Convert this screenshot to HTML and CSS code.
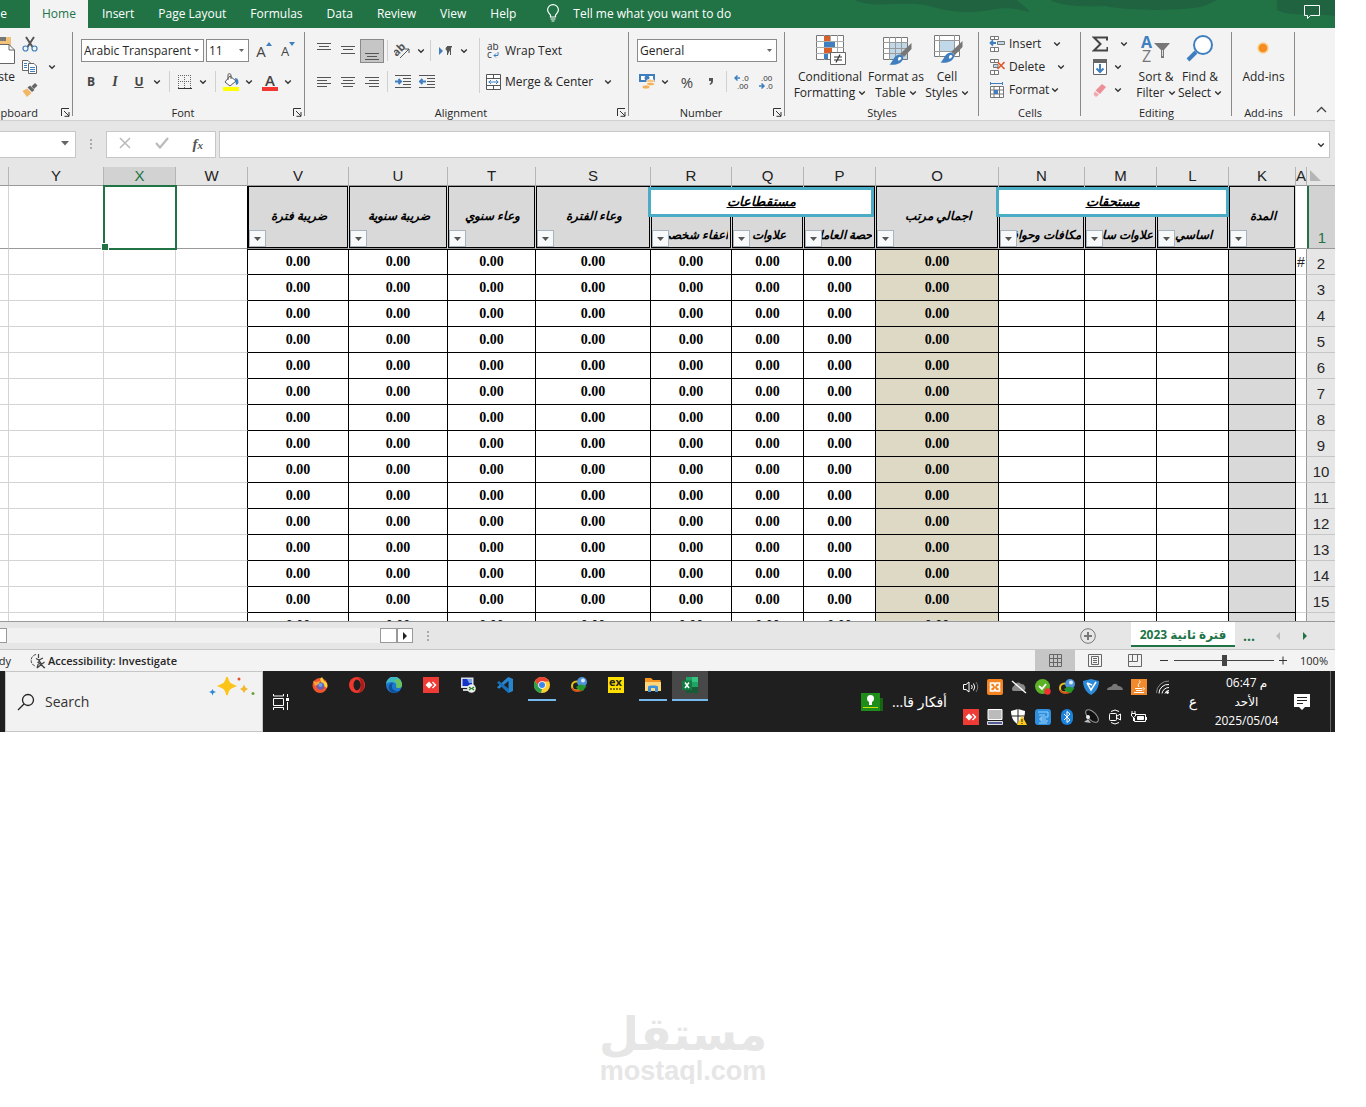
FILE: index.html
```html
<!DOCTYPE html>
<html lang="en">
<head>
<meta charset="UTF-8">
<title>Payroll sheet</title>
<link rel="stylesheet" href="styles.css">
</head>

<body>

<svg class="defs" aria-hidden="true">
  <symbol id="chev" viewBox="0 0 8 8"><path d="M1.2 2.6L4 5.2L6.8 2.6" fill="none" stroke="#333" stroke-width="1.4"/></symbol>
  <symbol id="launch" viewBox="0 0 9 9"><path d="M.5 8V.5H8M3 3L8 8M8 4V8.300H3.500" fill="none" stroke="#333"/></symbol>
  <symbol id="idm" viewBox="0 0 16 16"><circle cx="5.500" cy="9" r="4.500" fill="none" stroke="#e3c01f" stroke-width="2"/><path d="M1 11C3 15 8 14.500 11 13" fill="none" stroke="#d9481c" stroke-width="1.500"/><circle cx="11" cy="5" r="5" fill="#4d93d9"/><circle cx="12" cy="3.500" r="2" fill="#dbe9f5"/><path d="M5 10L9 7.500L15.500 9L12 14L7 12.500Z" fill="#23962c"/></symbol>
  <symbol id="anydesk" viewBox="0 0 16 16"><path d="M0 0H16V16H0Z" fill="#ef3b36"/><path d="M6 4.500L9.500 8L6 11.500L2.500 8ZM10 4.500L13.500 8L10 11.500L9 10.500L11.500 8L9 5.500Z" fill="#fff"/></symbol>
</svg>

<div class="app">

<header class="tabs">
  <a class="tab file" href="#file">File</a>
  <a class="tab active" href="#home">Home</a>
  <a class="tab" href="#insert">Insert</a>
  <a class="tab" href="#layout">Page Layout</a>
  <a class="tab" href="#formulas">Formulas</a>
  <a class="tab" href="#data">Data</a>
  <a class="tab" href="#review">Review</a>
  <a class="tab" href="#view">View</a>
  <a class="tab" href="#help">Help</a>
  <button class="tell">
    <svg width="14" height="18" viewBox="0 0 14 18" fill="none" stroke="#fff" stroke-width="1.200"><path d="M4.500 13V11C3.500 9.500 1.600 8.500 1.600 5.800A5.400 5.200 0 0 1 12.400 5.800C12.400 8.500 10.500 9.500 9.500 11V13ZM4.500 15H9.500M5.500 17H8.500"/></svg>
    Tell me what you want to do
  </button>
  <svg class="swirl" width="480" height="28" viewBox="0 0 480 28"><path d="M0 0C20 9 40 1 70 5C95 12 110 14 135 10C155 6 165 10 175 12C170 6 165 3 162 0ZM195 0C205 6 230 7 250 6C275 11 320 11 345 7C355 4 358 2 362 0ZM422 0V10C440 18 455 12 480 16V0Z" fill="#1f6340"/></svg>
  <button class="comments" aria-label="Comments"><svg width="18" height="16" viewBox="0 0 18 16" fill="none" stroke="#fff"><path d="M1.500 1.500H16.500V11.500H7.500L4.500 14.500V11.500H1.500Z"/></svg></button>
</header>

<section class="ribbon">

  <div class="group clipboard">
    <div class="body">
      <button class="paste">
        <svg width="40" height="32" viewBox="0 0 40 32"><path d="M10 5H36V28H10Z" fill="#f3c27a"/><path d="M22 5H31V9H20Z" fill="#777"/><path d="M20.500 12.500H34L39.500 18V31.500H20.500Z" fill="#fff" stroke="#666"/><path d="M34 12.500V18H39.500" fill="none" stroke="#666"/></svg>
        <span>Paste</span>
      </button>
      <div class="stack">
        <div class="line"><button class="ico" aria-label="Cut"><svg width="16" height="16" viewBox="0 0 16 16" fill="none"><path d="M4 1L10.500 11M12 1L5.500 11" stroke="#555" stroke-width="2"/><circle cx="3.500" cy="12.500" r="2.500" stroke="#3f7fbf" stroke-width="1.200"/><circle cx="12.500" cy="12.500" r="2.500" stroke="#3f7fbf" stroke-width="1.200"/></svg></button></div>
        <div class="line"><button class="ico" aria-label="Copy"><svg width="16" height="16" viewBox="0 0 16 16" fill="#fff" stroke="#666"><path d="M.5 1.500H6L8.500 4V11.500H.5Z"/><path d="M6.500 4.500H12L14.500 7V14.500H6.500Z"/><path d="M2 4.500H5M2 6.500H5M2 8.500H5M8 8.500H13M8 10.500H13M8 12.500H13" stroke="#3f7fbf"/></svg></button><button class="drop" aria-label="Copy options"><svg width="8" height="8"><use href="#chev"/></svg></button></div>
        <div class="line"><button class="ico" aria-label="Format Painter"><svg width="16" height="16" viewBox="0 0 16 16"><path d="M13 1L15.500 3.500L12 7L9.500 4.500Z" fill="#666"/><path d="M8 3.500L12.500 8L10 10L5.500 5.500Z" fill="#666"/><path d="M5 6.500L9.500 11L5 15L.5 9Z" fill="#f1b765"/></svg></button></div>
      </div>
    </div>
    <div class="caption"><span>Clipboard</span><button class="launch" aria-label="Clipboard settings"><svg width="9" height="9"><use href="#launch"/></svg></button></div>
  </div>

  <div class="group font">
    <div class="rows">
      <div class="row">
        <select class="fontname" aria-label="Font"><option>Arabic Transparent</option></select>
        <select class="fontsize" aria-label="Font size"><option>11</option></select>
        <button class="ico grow" aria-label="Increase font size">A<svg width="6" height="4" viewBox="0 0 6 4"><path d="M0 4L3 0L6 4Z" fill="#3f7fbf"/></svg></button>
        <button class="ico grow small" aria-label="Decrease font size">A<svg width="6" height="4" viewBox="0 0 6 4"><path d="M0 0L3 4L6 0Z" fill="#3f7fbf"/></svg></button>
      </div>
      <div class="row">
        <button class="ico"><b>B</b></button>
        <button class="ico italic"><b>I</b></button>
        <button class="ico under"><b>U</b></button>
        <button class="drop" aria-label="Underline options"><svg width="8" height="8"><use href="#chev"/></svg></button>
        <i class="sep"></i>
        <button class="ico" aria-label="Borders"><svg width="14" height="14" viewBox="0 0 14 14" fill="none" stroke="#666"><path d="M.5 0V13M6.500 0V13M12.500 0V13M0 .5H13M0 6.500H13" stroke-dasharray="1 1"/><path d="M0 13.500H14" stroke="#333"/></svg></button>
        <button class="drop" aria-label="Border options"><svg width="8" height="8"><use href="#chev"/></svg></button>
        <i class="sep"></i>
        <button class="ico" aria-label="Fill color"><svg width="18" height="18" viewBox="0 0 18 18"><path d="M8 3L14 8L8 13L3 9Z" fill="#fff" stroke="#555"/><path d="M6 7V1.500C6 .5 9 .5 9 2V6" fill="none" stroke="#555"/><path d="M13 5C16 5 17 8 16 11L14 12Z" fill="#3f7fbf"/><path d="M1 14H17V18H1Z" fill="#ffff00"/></svg></button>
        <button class="drop" aria-label="Fill options"><svg width="8" height="8"><use href="#chev"/></svg></button>
        <button class="ico fontcolor" aria-label="Font color">A</button>
        <button class="drop" aria-label="Font color options"><svg width="8" height="8"><use href="#chev"/></svg></button>
      </div>
    </div>
    <div class="caption"><span>Font</span><button class="launch" aria-label="Font settings"><svg width="9" height="9"><use href="#launch"/></svg></button></div>
  </div>

  <div class="group alignment">
    <div class="body">
      <div class="rows leftrows">
        <div class="row">
          <button class="ico" aria-label="Top align"><svg width="14" height="20" viewBox="0 0 14 20" stroke="#555"><path d="M0 2.500H14M2 5.500H12M0 8.500H14"/></svg></button>
          <button class="ico" aria-label="Middle align"><svg width="14" height="20" viewBox="0 0 14 20" stroke="#555"><path d="M0 5.500H14M2 8.500H12M0 12.500H14"/></svg></button>
          <button class="ico pressed" aria-label="Bottom align"><svg width="14" height="20" viewBox="0 0 14 20" stroke="#555"><path d="M0 12.500H14M2 15.500H12M0 18.500H14"/></svg></button>
          <i class="sep"></i>
          <button class="ico" aria-label="Orientation"><svg width="18" height="16" viewBox="0 0 18 16"><text x="0" y="10" transform="rotate(-45 6 9)" font-size="11" font-weight="bold" fill="#555">ab</text><path d="M6 15L15 6M11 6H15V10" fill="none" stroke="#555"/></svg></button>
          <button class="drop" aria-label="Orientation options"><svg width="8" height="8"><use href="#chev"/></svg></button>
          <i class="sep"></i>
          <button class="ico" aria-label="Text direction"><svg width="14" height="12" viewBox="0 0 14 12"><path d="M0 2L4 6L0 10Z" fill="#3f7fbf"/><path d="M8.500 10V1.500H13M11.500 1.500V10M8.500 1.500A2.500 2.500 0 0 0 8.500 6Z" fill="#555" stroke="#555"/></svg></button>
          <button class="drop" aria-label="Direction options"><svg width="8" height="8"><use href="#chev"/></svg></button>
        </div>
        <div class="row">
          <button class="ico" aria-label="Align left"><svg width="14" height="12" viewBox="0 0 14 12" stroke="#555"><path d="M0 1.500H14M0 4.500H10M0 7.500H14M0 10.500H10"/></svg></button>
          <button class="ico" aria-label="Center"><svg width="14" height="12" viewBox="0 0 14 12" stroke="#555"><path d="M0 1.500H14M2 4.500H12M0 7.500H14M2 10.500H12"/></svg></button>
          <button class="ico" aria-label="Align right"><svg width="14" height="12" viewBox="0 0 14 12" stroke="#555"><path d="M0 1.500H14M4 4.500H14M0 7.500H14M4 10.500H14"/></svg></button>
          <i class="sep"></i>
          <button class="ico" aria-label="Decrease indent"><svg width="16" height="14" viewBox="0 0 16 14" fill="none" stroke="#555"><path d="M0 .5H16M8 3.500H16M8 6.500H16M8 9.500H16M0 12.500H16"/><path d="M0 6.500H6M3.500 4L6 6.500L3.500 9" stroke="#3f7fbf" stroke-width="2"/></svg></button>
          <button class="ico" aria-label="Increase indent"><svg width="16" height="14" viewBox="0 0 16 14" fill="none" stroke="#555"><path d="M0 .5H16M8 3.500H16M8 6.500H16M8 9.500H16M0 12.500H16"/><path d="M7 6.500H1M3.500 4L1 6.500L3.500 9" stroke="#3f7fbf" stroke-width="2"/></svg></button>
        </div>
      </div>
      <div class="rows rightrows">
        <div class="row"><button class="wide"><svg width="15" height="16" viewBox="0 0 15 16"><text x="1" y="7" font-size="10" fill="#333">ab</text><text x="1" y="15" font-size="10" fill="#333">c</text><path d="M12 9V12.500H8M10 10.500L8 12.500L10 14.500" fill="none" stroke="#3f7fbf"/></svg>Wrap Text</button></div>
        <div class="row"><button class="wide"><svg width="15" height="16" viewBox="0 0 15 16" fill="#fff" stroke="#555"><path d="M.5 .5H14.500V15.500H.5ZM.5 4.500H14.500M.5 11.500H14.500M7.500 .5V4M7.500 12V15.500"/><path d="M2.500 8H12.500M5 6L3 8L5 10M10 6L12 8L10 10" fill="none" stroke="#3f7fbf"/></svg>Merge &amp; Center</button><button class="drop far" aria-label="Merge options"><svg width="8" height="8"><use href="#chev"/></svg></button></div>
      </div>
    </div>
    <div class="caption"><span>Alignment</span><button class="launch" aria-label="Alignment settings"><svg width="9" height="9"><use href="#launch"/></svg></button></div>
  </div>

  <div class="group number">
    <div class="rows">
      <div class="row"><select class="format" aria-label="Number format"><option>General</option></select></div>
      <div class="row">
        <button class="ico" aria-label="Accounting format"><svg width="18" height="17" viewBox="0 0 18 17"><path d="M1 1H17V9H1Z" fill="#3f7fbf"/><path d="M3 3H15V7H3Z" fill="#fff"/><circle cx="9" cy="5" r="2.500" fill="#3f7fbf"/><ellipse cx="12.500" cy="8" rx="4" ry="1.800" fill="#f6c27c" stroke="#fff" stroke-width=".6"/><ellipse cx="12.500" cy="11" rx="4" ry="1.800" fill="#f0b25c" stroke="#fff" stroke-width=".6"/><ellipse cx="8" cy="14" rx="4" ry="2" fill="#f0b25c" stroke="#fff" stroke-width=".6"/></svg></button>
        <button class="drop" aria-label="Currency options"><svg width="8" height="8"><use href="#chev"/></svg></button>
        <button class="ico percent">%</button>
        <button class="ico comma" aria-label="Comma style"><svg width="6" height="10" viewBox="0 0 6 10"><path d="M1 1H5V4C5 6 4 7 2 8L1.500 7C3 6 3 5 3 4H1Z" fill="#555"/></svg></button>
        <i class="sep"></i>
        <button class="ico dec" aria-label="Increase decimal"><svg width="16" height="16" viewBox="0 0 16 16"><path d="M6 4H1M3.500 1.500L1 4L3.500 6.500" fill="none" stroke="#3f7fbf" stroke-width="1.500"/><text x="8" y="7">.0</text><text x="3" y="15">.00</text></svg></button>
        <button class="ico dec" aria-label="Decrease decimal"><svg width="16" height="16" viewBox="0 0 16 16"><text x="3" y="7">.00</text><path d="M1 12H6M3.500 9.500L6 12L3.500 14.500" fill="none" stroke="#3f7fbf" stroke-width="1.500"/><text x="8" y="15">.0</text></svg></button>
      </div>
    </div>
    <div class="caption"><span>Number</span><button class="launch" aria-label="Number settings"><svg width="9" height="9"><use href="#launch"/></svg></button></div>
  </div>

  <div class="group styles">
    <div class="body">
      <button class="big w78"><svg width="32" height="32" viewBox="0 0 32 32"><path d="M2.500 1.500H29.500V25.500H2.500Z" fill="#fff" stroke="#777"/><path d="M2 7.500H30M2 13.500H30M2 19.500H30M10.500 1V26M16.500 1V26M23.500 1V26" stroke="#aaa"/><path d="M10 2H16V7H10ZM10 14H18V19H10Z" fill="#d8602b"/><path d="M10 8H21V13H10ZM10 20H14V25H10Z" fill="#3f7fbf"/><path d="M16.500 18.500H31.500V30.500H16.500Z" fill="#fff" stroke="#666"/><path d="M20 23H28M20 26H28M26 20.500L22 28.500" stroke="#333" stroke-width="1.200"/></svg><span>Conditional</span><span>Formatting <svg width="8" height="8"><use href="#chev"/></svg></span></button>
      <button class="big w54"><svg width="32" height="32" viewBox="0 0 32 32"><path d="M3.500 3.500H27.500V25.500H3.500Z" fill="#fff" stroke="#777"/><path d="M9 9H27V25H9Z" fill="#c0d8e8"/><path d="M3 8.500H28M3 14.500H28M3 19.500H28M9.500 3V26M15.500 3V26M21.500 3V26" stroke="#999"/><path d="M31.500 9V15L24 23L20 20Z" fill="#777"/><path d="M19 20.500C24 21 25 25 20 29C16 31 12 31 9.500 30.500C13 28 13 22 19 20.500Z" fill="#3f7fbf"/><path d="M19 23C22 23 22 25 20 26C18 28 17 25 19 23Z" fill="#fff"/></svg><span>Format as</span><span>Table <svg width="8" height="8"><use href="#chev"/></svg></span></button>
      <button class="big w48"><svg width="32" height="32" viewBox="0 0 32 32"><path d="M3.500 1.500H28.500V22.500H3.500Z" fill="#fff" stroke="#777"/><path d="M8 7H24V17H8Z" fill="#c0d8e8"/><path d="M3 6.500H29M3 17.500H29M8.500 1V23M23.500 1V23" stroke="#999"/><path d="M31.500 7V13L24 21L20 18Z" fill="#777"/><path d="M19 18.500C24 19 25 23 20 27C16 29 12 29 9.500 28.500C13 26 13 20 19 18.500Z" fill="#3f7fbf"/><path d="M19 21C22 21 22 23 20 24C18 26 17 23 19 21Z" fill="#fff"/></svg><span>Cell</span><span>Styles <svg width="8" height="8"><use href="#chev"/></svg></span></button>
    </div>
    <div class="caption"><span>Styles</span></div>
  </div>

  <div class="group cells">
    <div class="stack">
      <div class="line"><button class="wide"><svg width="16" height="16" viewBox="0 0 16 16" fill="#fff" stroke="#777"><path d="M1.500 .5H9.500V3.500H1.500ZM5.500 .5V3.500M1.500 11.500H9.500V15.500H1.500ZM5.500 11.500V15.500"/><path d="M8.500 5.500H15.500V8.500H8.500Z" fill="#c0d8e8"/><path d="M7 7H1.500M4 4.500L1.500 7L4 9.500" fill="none" stroke="#3f7fbf" stroke-width="1.800"/></svg>Insert</button><button class="drop gap10" aria-label="Insert options"><svg width="8" height="8"><use href="#chev"/></svg></button></div>
      <div class="line"><button class="wide"><svg width="16" height="16" viewBox="0 0 16 16" fill="#fff" stroke="#777"><path d="M1.500 .5H9.500V3.500H1.500ZM5.500 .5V3.500M1.500 11.500H9.500V15.500H1.500ZM5.500 11.500V15.500"/><path d="M4.500 5.500H9V8.500H4.500Z" fill="#c0d8e8"/><path d="M8.500 3L15.500 10M15.500 3L8.500 10" stroke="#e05a2b" stroke-width="1.600"/></svg>Delete</button><button class="drop gap10" aria-label="Delete options"><svg width="8" height="8"><use href="#chev"/></svg></button></div>
      <div class="line"><button class="wide"><svg width="16" height="16" viewBox="0 0 16 16" fill="#fff" stroke="#777"><path d="M1.500 4.500H14.500V15.500H1.500ZM1.500 8H14.500M1.500 12H14.500M5 4.500V15.500M10.500 4.500V15.500"/><path d="M5 8H9V12H5Z" fill="#3f7fbf" stroke="none"/><path d="M1.500 0V3M13.500 0V3M1.500 1.500H13.500" stroke="#3f7fbf"/></svg>Format</button><button class="drop" aria-label="Format options"><svg width="8" height="8"><use href="#chev"/></svg></button></div>
    </div>
    <div class="caption"><span>Cells</span></div>
  </div>

  <div class="group editing">
    <div class="body">
      <div class="stack">
        <div class="line"><button class="ico" aria-label="AutoSum"><svg width="16" height="16" viewBox="0 0 16 16"><path d="M15 4.500V1.500H2L8.500 8L2 14.500H15.500V11" fill="none" stroke="#444" stroke-width="2"/></svg></button><button class="drop gap6" aria-label="AutoSum options"><svg width="8" height="8"><use href="#chev"/></svg></button></div>
        <div class="line"><button class="ico" aria-label="Fill"><svg width="14" height="16" viewBox="0 0 14 16"><path d="M.5 .5H13.500V15.500H.5Z" fill="#fff" stroke="#666"/><path d="M0 0H14V4H0Z" fill="#666"/><path d="M7 5V13M3.500 9.500L7 13L10.500 9.500" fill="none" stroke="#3f7fbf" stroke-width="2"/></svg></button><button class="drop" aria-label="Fill options"><svg width="8" height="8"><use href="#chev"/></svg></button></div>
        <div class="line"><button class="ico" aria-label="Clear"><svg width="14" height="14" viewBox="0 0 14 14"><path d="M9 1L13 4L7 11L2.500 7.500Z" fill="#ee8f98"/><path d="M2 8.500L6 11.500L4 13.500H2L.5 11Z" fill="#f2a8ae"/></svg></button><button class="drop" aria-label="Clear options"><svg width="8" height="8"><use href="#chev"/></svg></button></div>
      </div>
      <button class="big w44"><svg width="32" height="32" viewBox="0 0 32 32"><text x="1" y="14" font-size="16" font-weight="bold" fill="#3f7fbf">A</text><text x="2" y="28" font-size="16" fill="#777">Z</text><path d="M14 9H30L24 16V24H21V16Z" fill="#777"/><path d="M22.500 16V22" stroke="#ddd"/></svg><span>Sort &amp;</span><span>Filter <svg width="8" height="8"><use href="#chev"/></svg></span></button>
      <button class="big w44"><svg width="32" height="32" viewBox="0 0 32 32"><circle cx="19" cy="11" r="9" fill="#fff" stroke="#3f7fbf" stroke-width="2"/><path d="M12 18L4 26" stroke="#3f7fbf" stroke-width="4"/></svg><span>Find &amp;</span><span>Select <svg width="8" height="8"><use href="#chev"/></svg></span></button>
    </div>
    <div class="caption"><span>Editing</span></div>
  </div>

  <div class="group addins">
    <div class="body">
      <button class="big"><svg width="32" height="32" viewBox="0 0 32 32"><circle cx="15" cy="14" r="5" fill="#f68b1f" stroke="#f9cf8b" stroke-width="1.500"/></svg><span>Add-ins</span></button>
    </div>
    <div class="caption"><span>Add-ins</span></div>
  </div>

  <button class="collapse" aria-label="Collapse ribbon"><svg width="11" height="7" viewBox="0 0 11 7"><path d="M1 6L5.500 1.500L10 6" fill="none" stroke="#444" stroke-width="1.300"/></svg></button>
</section>

<div class="formulabar">
  <select class="namebox" aria-label="Name box"><option></option></select>
  <span class="dots"></span>
  <div class="fxbox">
    <button aria-label="Cancel"><svg width="12" height="12" viewBox="0 0 12 12"><path d="M1 1L11 11M11 1L1 11" stroke="#bbb" stroke-width="1.600"/></svg></button>
    <button aria-label="Enter"><svg width="14" height="12" viewBox="0 0 14 12"><path d="M1 6L5 10.500L13 1" fill="none" stroke="#bbb" stroke-width="2.200"/></svg></button>
    <button class="fx">f<small>x</small></button>
  </div>
  <div class="fxinput">
    <input type="text" aria-label="Formula">
    <button aria-label="Expand formula bar"><svg width="10" height="8"><use href="#chev"/></svg></button>
  </div>
</div>

<main class="sheet">
  <table>
    <colgroup>
      <col class="c-z"><col class="c-y"><col class="c-72"><col class="c-72"><col class="c-v"><col class="c-u"><col class="c-t"><col class="c-s"><col class="c-r"><col class="c-72"><col class="c-72"><col class="c-o"><col class="c-n"><col class="c-72"><col class="c-72"><col class="c-k"><col class="c-a"><col class="c-num">
    </colgroup>
    <thead>
      <tr class="letters">
        <th></th><th>Y</th><th class="current">X</th><th>W</th><th>V</th><th>U</th><th>T</th><th>S</th><th>R</th><th>Q</th><th>P</th><th>O</th><th>N</th><th>M</th><th>L</th><th>K</th><th>A</th>
        <th><svg width="12" height="12" viewBox="0 0 12 12"><path d="M0 0V11H11Z" fill="#b5b5b5"/></svg></th>
      </tr>
    </thead>
    <tbody id="rows">
      <tr class="titles">
        <td></td><td></td><td class="selected"></td><td></td>
        <th dir="rtl">ضريبة فترة</th>
        <th dir="rtl">ضريبة سنوية</th>
        <th dir="rtl">وعاء سنوي</th>
        <th dir="rtl">وعاء الفترة</th>
        <th dir="rtl" class="low"><span>اعفاء شخصي</span><div class="textbox deductions">مستقطاعات</div></th>
        <th dir="rtl" class="low short"><span>علاوات</span></th>
        <th dir="rtl" class="low"><span>حصة العامل</span></th>
        <th dir="rtl">اجمالي مرتب</th>
        <th dir="rtl" class="low"><span>مكافات وحوافز</span><div class="textbox dues">مستحقات</div></th>
        <th dir="rtl" class="low"><span>علاوات سابقة</span></th>
        <th dir="rtl" class="low short"><span>اساسي</span></th>
        <th dir="rtl">المدة</th>
        <td class="a"></td><td class="num current">1</td>
      </tr>
    </tbody>
  </table>
</main>

<div class="sheetbar">
  <div class="hscroll">
    <button class="sb" aria-label="Scroll left"></button>
    <div class="track"></div>
    <div class="thumb"></div>
    <button class="sb" aria-label="Scroll right"><svg width="6" height="8" viewBox="0 0 6 8"><path d="M1 0L5 4L1 8Z" fill="#222"/></svg></button>
  </div>
  <span class="dots"></span>
  <button class="add" aria-label="New sheet"><svg width="16" height="16" viewBox="0 0 16 16" fill="none" stroke="#777"><circle cx="8" cy="8" r="7.300"/><path d="M8 4V12M4 8H12" stroke-width="2"/></svg></button>
  <a class="sheettab" dir="rtl" href="#sheet">فترة ثانية 2023</a>
  <a class="more" href="#sheets">...</a>
  <button class="nav" aria-label="Previous sheet"><svg width="5" height="8" viewBox="0 0 5 8"><path d="M5 0L1 4L5 8Z" fill="#bbb"/></svg></button>
  <button class="nav" aria-label="Next sheet"><svg width="5" height="8" viewBox="0 0 5 8"><path d="M0 0L4 4L0 8Z" fill="#217346"/></svg></button>
</div>

<div class="statusbar">
  <span class="ready">Ready</span>
  <button class="access"><svg width="16" height="16" viewBox="0 0 16 16" fill="none" stroke="#444"><path d="M6 1.500A6 6 0 0 0 5 13" stroke-dasharray="3 1"/><path d="M6 5.500L9 7L13 5M8.500 1L8.500 5M9.500 7L7 15M9.500 8L14 15M7.500 9L15 15M14.500 9L7 15" stroke-width="1.200"/></svg>Accessibility: Investigate</button>
  <div class="views">
    <button class="on" aria-label="Normal view"><svg width="13" height="13" viewBox="0 0 13 13" fill="none" stroke="#666"><path d="M.5 .5H12.500V12.500H.5ZM4.500 0V13M8.500 0V13M0 4.500H13M0 8.500H13"/></svg></button>
    <button aria-label="Page layout view"><svg width="14" height="13" viewBox="0 0 14 13" fill="none" stroke="#666"><path d="M.5 .5H13.500V12.500H.5ZM3.500 2.500H10.500V10.500H3.500ZM5 4.500H9M5 6.500H9M5 8.500H9"/></svg></button>
    <button aria-label="Page break view"><svg width="14" height="13" viewBox="0 0 14 13" fill="none" stroke="#666"><path d="M.5 .5H13.500V12.500H.5ZM4.500 0V7.500H.5M4.500 7.500H9.500V0"/></svg></button>
  </div>
  <div class="zoom">
    <button aria-label="Zoom out"><svg width="9" height="9" viewBox="0 0 9 9"><path d="M0 4.500H8" stroke="#333"/></svg></button>
    <input type="range" aria-label="Zoom" min="0" max="100" value="50">
    <button aria-label="Zoom in"><svg width="9" height="9" viewBox="0 0 9 9"><path d="M0 4.500H8M4 .5V8.500" stroke="#333"/></svg></button>
  </div>
  <span class="percentage">100%</span>
</div>

<footer class="taskbar">
  <label class="search">
    <svg width="18" height="18" viewBox="0 0 18 18" fill="none" stroke="#222" stroke-width="1.300"><circle cx="11" cy="7" r="5.500"/><path d="M7 11L1 17"/></svg>
    <input type="text" placeholder="Search">
    <svg width="46" height="20" viewBox="0 0 46 20"><path d="M18 0C19.500 6 20.500 7 26 9C20.500 11 19.500 12 18 18C16.500 12 15.500 11 10 9C15.500 7 16.500 6 18 0Z" fill="#fcc419" stroke="#fcc419" stroke-width="1.500"/><path d="M35 7.500L36.500 10.500L39 12L36.500 13.500L35 16L33.500 13.500L31 12L33.500 10.500Z" fill="#f5b72a"/><path d="M3.500 12L4.500 14L7 15L4.500 16L3.500 18.500L2.500 16L0 15L2.500 14Z" fill="#2b87d3"/><circle cx="30" cy="2" r="1.500" fill="#e0522b"/><circle cx="44" cy="16.500" r="1.500" fill="#6aa338"/></svg>
  </label>
  <button class="taskview" aria-label="Task view"><svg width="16" height="16" viewBox="0 0 16 16" fill="none" stroke="#fff"><path d="M.5 4.500H10.500V11.500H.5ZM.5 0V2H10.500V0M.5 16V13.500H10.500V16M14.500 0V3M14.500 8V16"/><path d="M13 4H16V7H13Z" fill="#fff" stroke="none"/></svg></button>
  <div class="apps">
    <button aria-label="Firefox"><svg width="16" height="16" viewBox="0 0 16 16"><circle cx="8" cy="8.500" r="7.500" fill="#f2542d"/><path d="M8 2L10 0L12 4C15 5 16 8 15 11L10 8Z" fill="#ffd23c"/><circle cx="8.500" cy="9" r="3.800" fill="#6f5bb0"/><path d="M1 4L4 5L8 4L7 7L3 9Z" fill="#f9a13a"/><circle cx="8.500" cy="8" r="2" fill="#6aa6dd"/></svg></button>
    <button aria-label="Opera"><svg width="16" height="16" viewBox="0 0 16 16"><circle cx="8" cy="8" r="8" fill="#f0382f"/><path d="M9 .2A8 8 0 0 1 9 15.800A7 7 0 0 0 11 8A7 7 0 0 0 9 .2Z" fill="#a51d1d"/><ellipse cx="8" cy="8" rx="3.500" ry="5.400" fill="#1f1f1f"/></svg></button>
    <button aria-label="Edge"><svg width="16" height="16" viewBox="0 0 16 16"><circle cx="8" cy="8" r="8" fill="#1c78cf"/><path d="M0 7A8 8 0 0 1 16 8C16 11 12 12 10 10C12 6 6 3 0 7Z" fill="#3fb8c4"/><path d="M12 1.500A8 8 0 0 1 16 8C16 11 12 12 10 10C11.500 7 10 4 8 4Z" fill="#6cc25a"/><path d="M7 6C4 10 7 15 13 14C10 17 4 16 3 12C2 9 4 6 7 6Z" fill="#0f4f94"/></svg></button>
    <button aria-label="AnyDesk"><svg width="16" height="16"><use href="#anydesk"/></svg></button>
    <button aria-label="Remote desktop"><svg width="16" height="16" viewBox="0 0 16 16"><path d="M1 .5H13.500V11H1Z" fill="#d8dde6"/><path d="M2.500 2H12V9H2.500Z" fill="#1235c6"/><path d="M7 2H12V6H9Z" fill="#7fa4ec"/><path d="M3 12H9V14H3Z" fill="#ccc"/><circle cx="11.500" cy="11.500" r="4.300" fill="#eee"/><path d="M9 10L11 11.500L9 13M14 10L12 11.500L14 13" fill="none" stroke="#20851f" stroke-width="1.200"/></svg></button>
    <button aria-label="Visual Studio Code"><svg width="16" height="16" viewBox="0 0 16 16"><path d="M11.500 0L16 2V14L11.500 16V4L2 11.800L0 10.300L10 1Z" fill="#2786d0"/><path d="M0 5.500L2 4L12 12V16L10.500 15.500Z" fill="#1870b8"/></svg></button>
    <button class="open" aria-label="Chrome"><svg width="16" height="16" viewBox="0 0 16 16"><circle cx="8" cy="8" r="8" fill="#ffcf32"/><path d="M1 4A8 8 0 0 1 15 4.500H8L5 9.500Z" fill="#ea4335"/><path d="M1 4L5 10L8 12L7 16A8 8 0 0 1 1 4Z" fill="#2e9f4c"/><circle cx="8" cy="8" r="3.800" fill="#fff"/><circle cx="8" cy="8" r="3" fill="#3d85ee"/></svg></button>
    <button aria-label="Download manager"><svg width="16" height="16"><use href="#idm"/></svg></button>
    <button aria-label="Exness"><svg width="16" height="16" viewBox="0 0 16 16"><path d="M0 0H16V16H0Z" fill="#ffe000"/><text x="1" y="9" font-size="11" font-weight="bold" fill="#222">ex</text><path d="M2 12H14" stroke="#554a00" stroke-width="1.500" stroke-dasharray="2 1"/></svg></button>
    <button class="open" aria-label="File Explorer"><svg width="16" height="16" viewBox="0 0 16 16"><path d="M0 1H6L8 3H15.500V14H0Z" fill="#f5941f"/><path d="M0 5H16V14H0Z" fill="#ffd67a"/><path d="M3 15V9.500C3 8 13 8 13 9.500V15H10V11H6V15Z" fill="#3a93e0"/></svg></button>
    <button class="open front" aria-label="Excel"><svg width="16" height="16" viewBox="0 0 16 16"><path d="M4 0H16V16H4Z" fill="#21a366"/><path d="M10 0H16V5H10Z" fill="#33c481"/><path d="M4 10H16V16H4Z" fill="#185c37"/><path d="M0 3.500H10V13H0Z" fill="#107c41"/><path d="M3 5.500L7 11M7 5.500L3 11" stroke="#fff" stroke-width="1.500"/></svg></button>
  </div>
  <button class="news"><svg width="22" height="18" viewBox="0 0 22 18"><path d="M0 0H19V18H0Z" fill="#1f8d1a"/><path d="M19 5H22V18H19Z" fill="#166412"/><circle cx="9.500" cy="5.500" r="3.500" fill="#fff"/><path d="M8 8H11V12H8Z" fill="#fff"/><path d="M2 14.500H17" stroke="#c8e000"/></svg><span dir="rtl">أفكار قا...</span></button>
  <div class="tray">
    <button aria-label="Volume"><svg width="16" height="16" viewBox="0 0 16 16" fill="none" stroke="#fff"><path d="M.5 5.500H3L6 3V13L3 10.500H.5ZM8.500 6Q10 8 8.500 10M10.500 4.500Q13 8 10.500 11.500"/><path d="M13 3Q16.500 8 13 13" stroke="#777"/></svg></button>
    <button aria-label="XAMPP"><svg width="16" height="16" viewBox="0 0 16 16"><rect width="16" height="16" rx="2" fill="#f5831f"/><path d="M3.500 4H7L8 6L9 4H12.500V7L11 8L12.500 9V12H9L8 10.500L7 12H3.500V9L5 8L3.500 7Z" fill="none" stroke="#fff" stroke-width="1.700"/></svg></button>
    <button aria-label="Cloud offline"><svg width="16" height="16" viewBox="0 0 16 16"><path d="M2 12A3 3 0 0 1 3 7A4 4 0 0 1 10 5A4 4 0 0 1 13 12Z" fill="#888"/><path d="M1 2L15 14" stroke="#fff" stroke-width="1.300"/></svg></button>
    <button aria-label="Antivirus"><svg width="16" height="16" viewBox="0 0 16 16"><circle cx="7.500" cy="7.500" r="7.500" fill="#5cb227"/><path d="M4 7L7 10L11 5" fill="none" stroke="#fff" stroke-width="1.800"/><circle cx="12.500" cy="12.500" r="3.200" fill="#f22f35"/></svg></button>
    <button aria-label="Download manager"><svg width="16" height="16"><use href="#idm"/></svg></button>
    <button aria-label="VPN"><svg width="16" height="16" viewBox="0 0 16 16"><path d="M0 2L8 0L16 2C16 9 12 14 8 16C4 14 0 9 0 2Z" fill="#2b8bd8"/><path d="M4 4L8 11L13 3M4 4L9 6" fill="none" stroke="#fff" stroke-width="1.500"/></svg></button>
    <button aria-label="OneDrive"><svg width="16" height="16" viewBox="0 0 16 16"><path d="M0 11C0 8 4 8 5 7C6 4 10 4 11 7C14 7 16 9 16 11Z" fill="#777"/></svg></button>
    <button aria-label="Java"><svg width="16" height="16" viewBox="0 0 16 16"><path d="M0 0H16V16H0Z" fill="#f08a2c"/><path d="M8.500 1.500C11 4 5 5 8 8M4 9.500H11M5 11.500H11M3 13.500H13M11.500 9C14 8 14 11 11.500 11" fill="none" stroke="#fff"/></svg></button>
    <button aria-label="Network"><svg width="16" height="16" viewBox="0 0 16 16" fill="none" stroke="#fff"><path d="M1.500 14A12 12 0 0 1 14 2" stroke="#888"/><path d="M4 14.500A9 9 0 0 1 14 5.500M7 14.500A7 7 0 0 1 14 8.500M10 14.500A4 4 0 0 1 14 11.500"/><circle cx="12.500" cy="13.500" r="1" fill="#fff"/></svg></button>
    <button aria-label="AnyDesk"><svg width="16" height="16"><use href="#anydesk"/></svg></button>
    <button aria-label="Display"><svg width="16" height="16" viewBox="0 0 16 16"><path d="M1 .5H15V10.500H1Z" fill="#bbb" stroke="#fff"/><path d="M.5 12.500H15.500V15.500H.5Z" fill="#555a99" stroke="#ddd"/></svg></button>
    <button aria-label="Security"><svg width="16" height="16" viewBox="0 0 16 16"><path d="M0 2L7 0L14 2C14 9 11 13 7 15.500C3 13 0 9 0 2Z" fill="#fff"/><path d="M7 0V15M0 7H14" stroke="#222"/><path d="M11 6.500L16 16H6Z" fill="#ffc91a"/><path d="M11 10V13M11 14V15" stroke="#222"/></svg></button>
    <button aria-label="Graphics"><svg width="16" height="16" viewBox="0 0 16 16"><rect width="16" height="16" rx="3" fill="#2d8fdd"/><path d="M3 3H13V8H6V12H13M4 6H10M4 10H11M4 14H12" fill="none" stroke="#9bd0f7"/></svg></button>
    <button aria-label="Bluetooth"><svg width="16" height="16" viewBox="0 0 16 16"><rect x="2" width="12" height="16" rx="6" fill="#1b82dd"/><path d="M5 5L11 11L8 13.500V2.500L11 5L5 11" fill="none" stroke="#fff"/></svg></button>
    <button aria-label="Satellite"><svg width="16" height="16" viewBox="0 0 16 16"><ellipse cx="9" cy="7" rx="4" ry="8" transform="rotate(-45 9 7)" fill="#111" stroke="#999"/><circle cx="5" cy="8" r="2" fill="#eee"/><path d="M1 13L5 10L8 14Z" fill="#bbb"/></svg></button>
    <button aria-label="Meet now"><svg width="16" height="16" viewBox="0 0 16 16" fill="none" stroke="#fff"><rect x="2.500" y="4.500" width="7" height="7" rx="1"/><path d="M10 7L13.500 5V11L10 9M4 2.500Q8 -.5 12 2.500M4 13.500Q8 16.500 12 13.500"/></svg></button>
    <button aria-label="Battery"><svg width="16" height="16" viewBox="0 0 16 16" fill="none" stroke="#fff"><path d="M5 5.500H14.500V12.500H3.500V9M15.500 8V11M1 2V4M4 2V4M.5 4.500H4.500V7L2.500 8.500L.5 7ZM2.500 8V12"/><path d="M6.500 7.500H12.500V10.500H6.500Z" fill="#fff"/></svg></button>
  </div>
  <button class="lang">ع</button>
  <div class="clock"><span>06:47 م</span><span>الأحد</span><span>2025/05/04</span></div>
  <button class="notify" aria-label="Notifications"><svg width="16" height="16" viewBox="0 0 16 16"><path d="M0 0H16V13H11L8 16L5 13H0Z" fill="#fff"/><path d="M3 3.500H13M3 6.500H13M3 9.500H9" stroke="#222"/></svg></button>
</footer>

</div>

<div class="brand">
  <div class="brandname" lang="ar">مستقل</div>
  <div class="domain">mostaql.com</div>
</div>

<script src="script.js"></script>
</body>
</html>
```
FILE: styles.css
```css
*{ box-sizing:border-box; }

body{
  margin:0;
  background:#fff;
  font-family:"Open Sans","DejaVu Sans",sans-serif;
  font-size:12px;
  color:#262626;
}

button, select, input{
  font:inherit;
  color:inherit;
  border:none;
  background:none;
  padding:0;
  margin:0;
  outline:none;
}

button{ white-space:nowrap; }
a{ color:inherit; text-decoration:none; }
svg{ flex:none; }
.defs{ display:none; }

.app{
  margin-right:31px;
  overflow:hidden;
}

/* tab strip */
.tabs{
  display:flex;
  height:28px;
  background:#217346;
  color:#fff;
  position:relative;
}

.tab{
  display:flex;
  align-items:center;
  padding:0 12px 2px;
}

.file{
  width:30px;
  padding-left:0;
  padding-right:23px;
  justify-content:flex-end;
}

.tab.active{
  background:#f3f3f3;
  color:#217346;
  margin-right:2px;
}

.tell{
  display:flex;
  align-items:center;
  gap:13px;
  padding:0 0 2px 18px;
}

.swirl{
  position:absolute;
  right:0;
  top:0;
}

.comments{
  margin-left:auto;
  padding-right:14px;
  position:relative;
}

/* ribbon */
.ribbon{
  display:flex;
  height:93px;
  padding-top:4px;
  background:#f3f3f3;
  border-bottom:1px solid #d0d0d0;
}

.group{
  flex:none;
  height:88px;
  display:flex;
  flex-direction:column;
  background:linear-gradient(#8a8a8a,#8a8a8a) right top/1px 84px no-repeat;
}

.clipboard{ width:73px; }
.font{ width:232px; }
.alignment{ width:324px; }
.number{ width:156px; }
.styles{ width:194px; }
.cells{ width:102px; }
.editing{ width:151px; }
.addins{ width:63px; }

.body{ display:flex; height:72px; }
.rows{ height:72px; padding:3px 0 0 6px; }
.row{ display:flex; align-items:center; height:31px; }
.stack{ height:72px; }
.line{ display:flex; align-items:center; height:23px; }

.caption{
  display:flex;
  align-items:center;
  height:16px;
  font-size:11px;
}

.caption span{ flex:1; text-align:center; padding-right:16px; }
.launch{ margin-left:-16px; padding-right:3px; display:flex; }

.clipboard .caption span{
  flex:none;
  width:54px;
  display:flex;
  justify-content:flex-end;
}
.clipboard .launch{ margin-left:7px; }

.ico{
  width:24px;
  height:24px;
  display:flex;
  align-items:center;
  justify-content:center;
  color:#444;
}

.drop{
  width:12px;
  height:24px;
  display:flex;
  align-items:center;
  justify-content:center;
}

.gap10{ margin-left:10px; }
.gap6{ margin-left:6px; }
.far{ margin-left:9px; }

.sep{
  width:1px;
  height:21px;
  margin:0 3px 0 6px;
  background:#d0d0d0;
}

.alignment .sep{ margin:0 3px; }

.pressed{
  background:#c6c6c6;
  border:1px solid #8a8a8a;
  height:24px;
}

.paste{
  width:15px;
  display:flex;
  flex-direction:column;
  align-items:flex-end;
}

.paste span{ line-height:16px; margin-top:5px; }

.clipboard .stack{ padding-left:3px; }
.clipboard .drop{ margin-left:4px; }

.rows .fontname, .rows .fontsize, .rows .format{
  height:23px;
  border:1px solid #8a8a8a;
  padding-left:2px;
}

select{
  appearance:none;
  background:#fff url("data:image/svg+xml,%3Csvg xmlns='http://www.w3.org/2000/svg' width='5' height='4'%3E%3Cpath d='M0 0H5L2.500 3Z' fill='%23666'/%3E%3C/svg%3E") no-repeat right 4px center;
}

.fontname{ width:123px; margin-left:2px; }
.fontsize{ width:43px; margin:0 3px 0 2px; }
.format{ width:140px; margin-left:2px; }

.grow{ font-size:15px; align-items:center; }
.grow svg{ align-self:flex-start; margin-top:3px; }
.small{ font-size:13px; }
.italic{ font-family:"Liberation Serif",serif; font-style:italic; font-size:14px; }
.under{ text-decoration:underline; }

.fontcolor{
  font-size:15px;
  font-weight:600;
  width:16px;
  height:18px;
  margin:0 4px 0 7px;
  line-height:14px;
  border-bottom:4px solid #f5352f;
}

.leftrows{
  width:174px;
  padding-left:7px;
}

.rightrows{
  padding-left:7px;
  position:relative;
}

.rightrows::before{
  content:"";
  position:absolute;
  left:0;
  top:6px;
  width:1px;
  height:55px;
  background:#d0d0d0;
}

.wide{
  display:flex;
  align-items:center;
  gap:4px;
}

.percent{ font-size:15px; margin-left:4px; }
.number .sep{ margin:0 3px; }

.dec text{
  font:8px "Liberation Sans",Arial,sans-serif;
  fill:#333;
}

.big{
  display:flex;
  flex-direction:column;
  align-items:center;
  padding-top:2px;
  line-height:16px;
}

.big svg{ margin-bottom:3px; }
.big span svg{ margin:0; }
.styles .body{ padding-left:6px; }
.w78{ width:78px; }
.w54{ width:54px; }
.w48{ width:48px; }
.w44{ width:44px; }

.cells .stack{ padding-left:10px; }
.editing .stack{ width:53px; padding-left:7px; }
.editing .drop{ margin-right:auto; }
.addins .body{ justify-content:center; }
.styles .caption span, .cells .caption span, .editing .caption span, .addins .caption span{ padding:0; }

.collapse{
  margin-left:auto;
  padding:0 8px 3px 0;
  align-self:flex-end;
}

/* formula bar */
.formulabar{
  display:flex;
  align-items:center;
  height:46px;
  background:#e6e6e6;
}

.namebox{
  width:76px;
  height:27px;
  border:1px solid #c6c6c6;
  border-left:none;
  background-position:right 6px center;
  background-size:8px 6px;
}

.dots{
  width:2px;
  height:10px;
  margin:0 14px;
  background:repeating-linear-gradient(#aaa 0 2px,transparent 2px 4px);
}

.fxbox{
  display:flex;
  justify-content:space-around;
  align-items:center;
  width:110px;
  height:27px;
  background:#fff;
  border:1px solid #c6c6c6;
}

.fx{
  font-family:"Liberation Serif",serif;
  font-style:italic;
  font-weight:bold;
  font-size:15px;
  color:#555;
}
.fx small{ font-size:11px; }

.fxinput{
  flex:1;
  display:flex;
  height:27px;
  margin:0 5px 0 3px;
  padding-right:3px;
  background:#fff;
  border:1px solid #c6c6c6;
}
.fxinput input{ flex:1; }

/* grid */
.sheet{
  height:454px;
  overflow:hidden;
}

table{
  width:100%;
  table-layout:fixed;
  border-collapse:separate;
  border-spacing:0;
}

.c-y{ width:95px; }
.c-72{ width:72px; }
.c-v{ width:101px; }
.c-u{ width:99px; }
.c-t{ width:88px; }
.c-s{ width:115px; }
.c-r{ width:81px; }
.c-o{ width:123px; }
.c-n{ width:86px; }
.c-k{ width:67px; }
.c-a{ width:11px; }
.c-num{ width:28px; }

th, td{ padding:0; text-align:center; }

.letters th{
  height:19px;
  background:#e6e6e6;
  border-right:1px solid #b5b5b5;
  border-bottom:1px solid #999;
  font:15px "Liberation Sans",Arial,sans-serif;
  line-height:18px;
  color:#222;
}

.letters .current{ background:#d2d2d2; color:#217346; }
.letters th:last-child{ border-right:none; text-align:left; }
.letters svg{ margin-left:3px; vertical-align:-1px; }

td{
  height:26px;
  border-right:1px solid #d4d4d4;
  border-bottom:1px solid #d4d4d4;
}

td.v{
  border-color:#000;
  font:bold 14px "Liberation Serif","Times New Roman",serif;
  color:#000;
}

td.edge{ border-right-color:#000; }
td.total{ background:#ddd9c4; }
td.period{ background:#d9d9d9; }
.first td.v{ box-shadow:inset 0 1px #000; }

td.a{
  border-right-color:#999;
  font:14px "Liberation Sans",Arial,sans-serif;
}

td.num{
  background:#e6e6e6;
  border-right:none;
  border-color:#c6c6c6;
  font:15px "Liberation Sans",Arial,sans-serif;
  line-height:20px;
  vertical-align:bottom;
}

.titles td, .titles th{
  height:63px;
  border-bottom:1px solid #999;
}
.titles td{ border-right-color:transparent; }
.titles td:nth-child(1){ border-right-color:#d4d4d4; }
.titles td:nth-child(4){ border-right-color:#000; }

td.num.current{
  background:#d2d2d2;
  color:#217346;
  border-left:2px solid #217346;
}

.titles th{
  position:relative;
  padding-bottom:3px;
  border-right:1px solid #d9d9d9;
  background:#d9d9d9;
  box-shadow:inset 0 0 0 1px #000;
  font-size:12px;
  font-style:italic;
  font-weight:bold;
  color:#000;
  white-space:nowrap;
}

.titles .low{ vertical-align:bottom; }
.low span{
  display:block;
  margin:0 4px 0 17px;
  overflow:hidden;
  line-height:20px;
}
.short span{ margin-left:4px; }

.titles .selected{
  position:relative;
  outline:2px solid #217346;
  outline-offset:-1px;
  border-color:#fff;
}
.selected::after{
  content:"";
  position:absolute;
  left:-3px;
  bottom:-3px;
  width:6px;
  height:6px;
  background:#217346;
  border:1px solid #fff;
}

.filter{
  position:absolute;
  left:0;
  bottom:1px;
  width:17px;
  height:17px;
  display:flex;
  align-items:center;
  justify-content:center;
  background:#f7f9fb;
  border:1px solid #a9b4bf;
}

/* text boxes floating over the header cells */
.textbox{
  position:absolute;
  z-index:1;
  top:1px;
  left:-4px;
  height:30px;
  line-height:22px;
  background:#fff;
  border:3px solid #4bacc6;
  font-size:13px;
  text-decoration:underline;
}
.deductions{ width:226px; }
.dues{ width:233px; }

/* sheet tabs */
.sheetbar{
  display:flex;
  align-items:center;
  height:29px;
  background:#e6e6e6;
  border-top:1px solid #999;
  border-bottom:1px solid #c6c6c6;
}

.hscroll{
  display:flex;
  width:413px;
  height:15px;
}
.track{ flex:1; background:#f1f1f1; }
.thumb{ width:17px; background:#fff; border:1px solid #999; }
.sb{
  width:16px;
  background:#fff;
  border:1px solid #999;
  display:flex;
  align-items:center;
  justify-content:center;
}
.sb:first-child{ width:7px; border-left:none; }

.add{ margin-left:auto; display:flex; }

.sheettab{
  align-self:flex-start;
  width:104px;
  height:25px;
  margin-left:35px;
  line-height:25px;
  text-align:center;
  white-space:nowrap;
  background:#fff;
  border-bottom:2px solid #217346;
  color:#217346;
  font-weight:bold;
}

.more{ margin:0 19px 0 8px; color:#217346; font-weight:bold; font-size:14px; }
.nav{ width:28px; display:flex; justify-content:center; }
.nav:last-child{ margin-right:16px; }
.nav:nth-last-child(2){ margin-left:-11px; }

/* status bar */
.statusbar{
  display:flex;
  align-items:center;
  height:21px;
  background:#f3f3f3;
  font-size:11px;
}

.ready{
  width:11px;
  display:flex;
  justify-content:flex-end;
}

.access{
  display:flex;
  align-items:center;
  gap:2px;
  margin-left:19px;
  font-weight:600;
}

.views{ display:flex; margin-left:auto; }
.views button{
  width:40px;
  height:21px;
  display:flex;
  align-items:center;
  justify-content:center;
}
.views .on{ background:#c6c6c6; }

.zoom{ display:flex; align-items:center; margin-left:5px; }
.zoom button{ display:flex; }

.zoom input{
  appearance:none;
  width:100px;
  height:13px;
  margin:0 5px;
  background:linear-gradient(#444,#444) center/100% 1px no-repeat;
}

.zoom input::-webkit-slider-thumb{
  appearance:none;
  width:5px;
  height:11px;
  background:#444;
}

.percentage{ margin:0 7px 0 12px; }

/* taskbar */
.taskbar{
  display:flex;
  align-items:center;
  height:61px;
  padding-left:5px;
  background:#1f1f1f;
  color:#fff;
}

.search{
  display:flex;
  align-items:center;
  width:258px;
  height:61px;
  padding:0 7px 0 11px;
  background:#f2f2f2;
  border:1px solid #c6c6c6;
  color:#222;
}
.search input{ flex:1; min-width:0; margin-left:10px; font-size:14px; }
.search input::placeholder{ color:#333; opacity:1; }
.search svg:last-child{ align-self:flex-start; margin-top:5px; }

.taskview{ display:flex; margin:0 17px 0 10px; }

.apps{ display:flex; align-self:flex-start; gap:9px; }
.apps button{
  width:28px;
  height:30px;
  display:flex;
  align-items:center;
  justify-content:center;
  border-bottom:2px solid transparent;
}
.apps .open{ border-color:#76b9ed; }
.apps .front{ width:36px; margin-left:-4px; background:#484848; }

.news{
  display:flex;
  align-items:center;
  gap:9px;
  margin-left:auto;
  font-size:14px;
}

.tray{
  display:grid;
  grid-template-columns:repeat(9,24px);
  grid-auto-rows:30px;
  margin-left:12px;
}
.tray button{ display:flex; align-items:center; justify-content:center; }

.lang{ width:36px; font-size:14px; }

.clock{
  width:71px;
  display:flex;
  flex-direction:column;
  align-items:center;
  line-height:19px;
}

.notify{
  display:flex;
  align-items:center;
  height:61px;
  padding-right:20px;
  margin:0 4px 0 12px;
  border-right:1px solid #666;
}

/* footer mark */
.brand{
  margin-top:278px;
  text-align:center;
  color:#e6e6e6;
  font-weight:bold;
}
.brandname{ font-family:"DejaVu Sans",sans-serif; font-size:46px; line-height:48px; }
.domain{ font-family:"Liberation Sans",Arial,sans-serif; font-size:27px; line-height:26px; }
```
FILE: script.js
```js
var rows = document.getElementById("rows");

// cells from column Z (left) to K (right): e = empty, v = amount, b = bordered blank
var columns = ["e","e","e","edge","v","v","v","v","v","v","v","total","b","b","b","period"];

for(var n=2;n<=16;n++){
  var tr = document.createElement("tr");
  if(n==2) tr.className = "first";

  for(var i=0;i<columns.length;i++){
    var td = document.createElement("td");
    var kind = columns[i];
    if(kind=="edge") td.className = "edge";
    else if(kind=="v") td.className = "v";
    else if(kind!="e") td.className = "v " + kind;
    if(kind=="v" || kind=="total") td.textContent = "0.00";
    tr.appendChild(td);
  }

  var a = document.createElement("td");
  a.className = "a";
  if(n==2) a.textContent = "#";
  tr.appendChild(a);

  var num = document.createElement("td");
  num.className = "num";
  num.textContent = n;
  tr.appendChild(num);

  rows.appendChild(tr);
}

// drop-down filter button on every titled column
var titles = document.querySelectorAll(".titles th");

for(var j=0;j<titles.length;j++){
  var button = document.createElement("button");
  button.className = "filter";
  button.setAttribute("aria-label","Filter");
  button.innerHTML = '<svg width="7" height="4" viewBox="0 0 7 4"><path d="M0 0H7L3.500 4Z" fill="#555"/></svg>';
  titles[j].appendChild(button);
}
```
